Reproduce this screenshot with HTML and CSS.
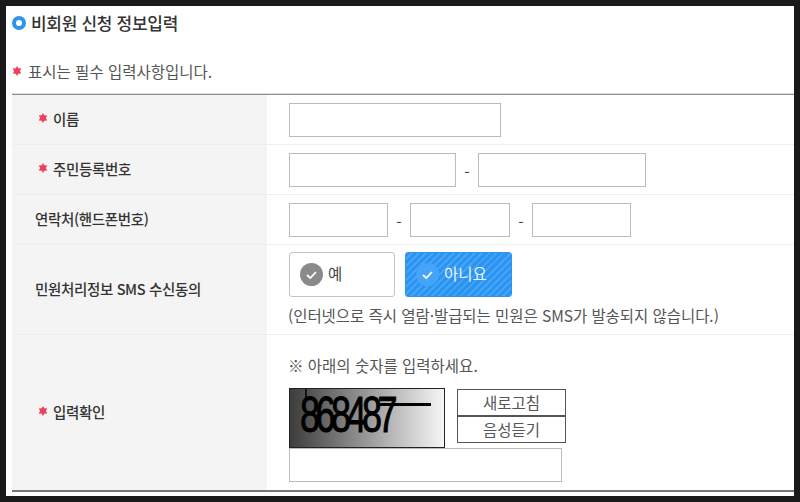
FILE: index.html
```html
<!DOCTYPE html>
<html lang="ko">
<head>
<meta charset="utf-8">
<title>비회원 신청 정보입력</title>
<link rel="stylesheet" href="styles.css">
</head>
<body>
<main class="panel">
  <h1 class="title"><span class="ring"></span>비회원 신청 정보입력</h1>
  <p class="note"><span class="star"></span>표시는 필수 입력사항입니다.</p>
  <div class="form">
    <div class="row r1">
      <div class="label star-label"><span class="star"></span>이름</div>
      <div class="field"><span class="input w212"></span></div>
    </div>
    <div class="row r1">
      <div class="label star-label"><span class="star"></span>주민등록번호</div>
      <div class="field"><span class="input w167"></span><span class="dash">-</span><span class="input w168"></span></div>
    </div>
    <div class="row r1">
      <div class="label">연락처(핸드폰번호)</div>
      <div class="field"><span class="input w99"></span><span class="dash">-</span><span class="input w100"></span><span class="dash">-</span><span class="input w99"></span></div>
    </div>
    <div class="row r2">
      <div class="label">민원처리정보 SMS 수신동의</div>
      <div class="field col">
        <div class="choices">
          <div class="choice">
            <svg class="check" viewBox="0 0 23 23"><circle cx="11.5" cy="11.5" r="11.5" fill="#8a8a8a"/><path d="M7 12l3.3 3L16 9" fill="none" stroke="#fff" stroke-width="1.8"/></svg>
            <span>예</span>
          </div>
          <div class="choice on">
            <svg class="check" viewBox="0 0 23 23"><circle cx="11.5" cy="11.5" r="11.5" fill="#43a4f9"/><path d="M7 12l3.3 3L16 9" fill="none" stroke="#fff" stroke-width="1.8"/></svg>
            <span>아니요</span>
          </div>
        </div>
        <p class="hint">(인터넷으로 즉시 열람·발급되는 민원은 SMS가 발송되지 않습니다.)</p>
      </div>
    </div>
    <div class="row r3">
      <div class="label star-label"><span class="star"></span>입력확인</div>
      <div class="field col">
        <p class="cap-note">※ 아래의 숫자를 입력하세요.</p>
        <div class="cap-row">
          <svg class="captcha" viewBox="0 0 154 58">
            <defs><linearGradient id="cg"><stop offset="0" stop-color="#3c3c3c"/><stop offset="1" stop-color="#f6f6f6"/></linearGradient></defs>
            <rect width="154" height="58" fill="url(#cg)"/>
            <text x="14" y="43" transform="scale(.72 1)" class="cap-digits">868487</text>
            <path d="M16 0v10" stroke="#000" stroke-width="1.5" fill="none"/>
            <path d="M88 15.500H141" stroke="#000" stroke-width="3" fill="none"/>
          </svg>
          <div class="cap-btns">
            <span class="cap-btn">새로고침</span>
            <span class="cap-btn">음성듣기</span>
          </div>
        </div>
        <span class="input cap-input"></span>
      </div>
    </div>
  </div>
</main>
</body>
</html>
```
FILE: styles.css
```css
* { box-sizing: border-box; }
html, body { margin: 0; height: 502px; overflow: hidden; }
body {
  background: #1a1a1a;
  padding: 6px;
  font-family: "Noto Sans CJK KR", "Noto Sans", sans-serif;
  color: #444;
  font-size: 15.5px;
}
.panel { background: #fff; height: 490px; padding-left: 6px; }
.title {
  margin: 0;
  height: 32px;
  display: flex;
  align-items: center;
  gap: 5px;
  font-size: 17px;
  font-weight: 500;
  color: #333;
  letter-spacing: -0.3px;
}
.ring {
  width: 14px; height: 14px;
  margin-top: 2px;
  border: 4px solid #2d95ee;
  border-radius: 50%;
  background: #fff;
}
.note {
  margin: 0;
  height: 56px;
  padding-top: 10px;
  display: flex;
  align-items: center;
  gap: 6px;
  color: #555;
  line-height: 20px;
}
.star {
  width: 10px; height: 10px;
  flex: none;
  background: #f0405a;
  clip-path: polygon(50% 0, 63% 22%, 93% 25%, 79% 50%, 93% 75%, 63% 78%, 50% 100%, 37% 78%, 7% 75%, 21% 50%, 7% 25%, 37% 22%);
}
.form {
  border-top: 1px solid #8e8e8e;
  box-shadow: 0 -1px 0 #ddd;
  border-bottom: 2px solid #777;
  height: 398px;
}
.row { display: flex; border-bottom: 1px solid #eee; }
.row:last-child { border-bottom: 0; }
.r1 { height: 50px; }
.r2 { height: 90px; }
.r3 { height: 155px; }
.label {
  width: 255px;
  flex: none;
  background: #f4f4f4;
  display: flex;
  align-items: center;
  padding: 0 0 3px 23px;
  gap: 5px;
  font-size: 14.5px;
  font-weight: 500;
  color: #333;
  letter-spacing: -0.35px;
}
.star-label { padding-left: 26px; }
.field {
  flex: 1;
  display: flex;
  align-items: flex-start;
  padding: 8px 0 0 22px;
}
.col { flex-direction: column; }
.input {
  display: block;
  height: 34px;
  border: 1px solid #bbb;
  background: #fff;
  flex: none;
}
.w212 { width: 212px; }
.w167 { width: 167px; }
.w168 { width: 168px; }
.w99 { width: 99px; }
.w100 { width: 100px; }
.dash { width: 22px; text-align: center; line-height: 36px; color: #444; }
.r2 .field { padding-top: 7px; }
.choices { display: flex; gap: 10px; }
.choice {
  width: 106px;
  height: 45px;
  border: 1px solid #c4c4c4;
  border-radius: 3px;
  display: flex;
  align-items: center;
  gap: 5px;
  padding: 0 0 0 10px;
  line-height: 20px;
  color: #444;
}
.choice span { position: relative; top: -2px; }
.choice.on {
  width: 107px;
  border-color: #2d95ee;
  color: #e9f5ff;
  background: repeating-linear-gradient(135deg, #2b93f0 0, #2b93f0 3px, #45a4f5 3px, #45a4f5 5px);
}
.check { width: 23px; height: 23px; flex: none; }
.hint {
  margin: 7px 0 0 -1px;
  line-height: 22px;
  letter-spacing: -0.05px;
  color: #555;
  white-space: nowrap;
}
.r3 .field { padding-top: 18px; }
.cap-note { margin: 0 0 11px -1px; line-height: 24px; color: #555; white-space: nowrap; }
.cap-row { display: flex; gap: 12px; align-items: flex-start; }
.captcha { width: 156px; height: 60px; display: block; border: 1px solid #222; flex: none; }
.cap-digits { font-family: "Liberation Sans", sans-serif; font-size: 50px; letter-spacing: -6.3px; fill: #000; stroke: #000; stroke-width: 1px; }
.cap-btns { display: flex; flex-direction: column; padding-top: 1px; }
.cap-btn {
  width: 109px;
  height: 27px;
  border: 1px solid #555;
  text-align: center;
  line-height: 24px;
  color: #555;
}
.cap-input { width: 273px; height: 34px; }
```
